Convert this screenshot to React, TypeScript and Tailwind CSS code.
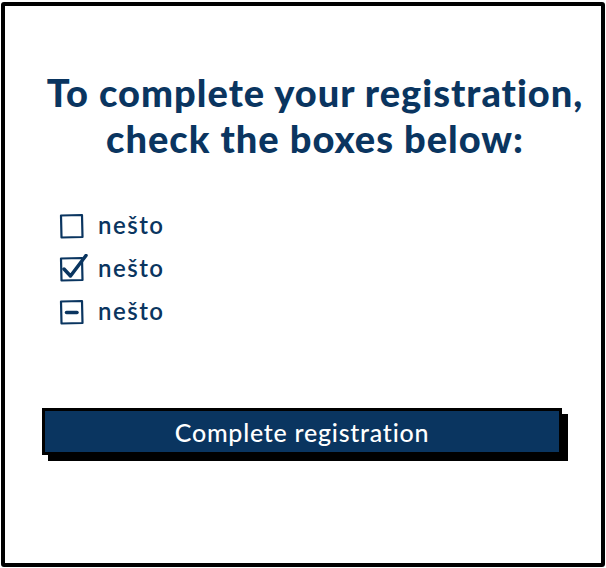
import React from "react";

const navy = "#0a3560";

const Box = ({ kind }: { kind: "empty" | "checked" | "mixed" }) => (
  <svg width="30" height="28" viewBox="0 0 30 28" className="shrink-0">
    <path
      d="M2 4.5 L23 4 L23.5 26 L2.5 26.5 Z"
      fill="none"
      stroke={navy}
      strokeWidth="2.2"
      strokeLinejoin="round"
    />
    {kind === "checked" && (
      <path
        d="M5 15 L11.5 22 L27 1.5"
        fill="none"
        stroke={navy}
        strokeWidth="3.5"
        strokeLinecap="round"
        strokeLinejoin="round"
      />
    )}
    {kind === "mixed" && (
      <path d="M7.5 15.5 L18 15.5" stroke={navy} strokeWidth="3.5" strokeLinecap="round" />
    )}
  </svg>
);

const items: ("empty" | "checked" | "mixed")[] = ["empty", "checked", "mixed"];

export default function App() {
  return (
    <div
      className="h-[568px] w-[606px] bg-white px-[1px] pt-[2px] pb-[1px]"
      style={{ fontFamily: "Lato, 'Open Sans', sans-serif" }}
    >
      <div className="flex h-full flex-col rounded-[3px] border-[4px] border-black bg-white">
        <h1 className="mt-[63px] pl-[24px] text-center text-[38px] font-black leading-[46px] tracking-[1px] text-[#0a3560]">
          To complete your registration,
          <br />
          check the boxes below:
        </h1>
        <div className="mt-[50px] ml-[54px] flex flex-col gap-[15px]">
          {items.map((k) => (
            <div key={k} className="flex items-center gap-[9px]">
              <Box kind={k} />
              <span className="text-[24px] font-semibold leading-[28px] tracking-[1.5px] text-[#0a3560]">nešto</span>
            </div>
          ))}
        </div>
        <div className="mt-[83px] ml-[37px] mr-[39px]">
          <button className="h-[47px] w-full border-[3px] border-black bg-[#0a3560] pt-[2px] text-[25px] font-medium tracking-[0.75px] text-white shadow-[6px_6px_0_#000]">
            Complete registration
          </button>
        </div>
      </div>
    </div>
  );
}
